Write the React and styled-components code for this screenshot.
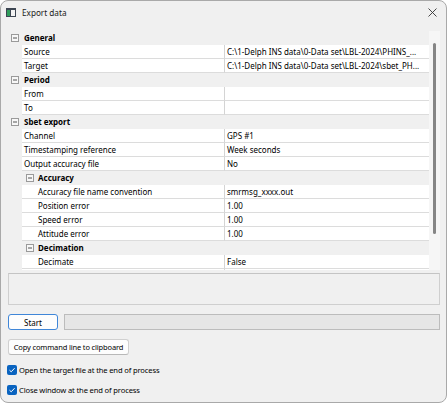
import React from "react";
import styled, { createGlobalStyle } from "styled-components";

const GlobalStyle = createGlobalStyle`
  html, body { margin: 0; padding: 0; background: #ffffff; }
  body { font-family: "Noto Sans", "Open Sans", sans-serif; }
  * { box-sizing: border-box; }
`;

const FONT = `"Noto Sans", "Open Sans", sans-serif`;

const Window = styled.div`
  width: 447px;
  height: 403px;
  background: #f0f0f0;
  border: 1px solid #a9a9a9;
  border-radius: 8px;
  overflow: hidden;
  display: flex;
  flex-direction: column;
  font-family: ${FONT};
  font-size: 8px;
  color: #000;
`;

const TitleBar = styled.div`
  height: 25px;
  display: flex;
  align-items: center;
  padding: 0 0 3px 5px;
  flex-shrink: 0;
`;

const Title = styled.span`
  margin-left: 6px;
  font-size: 8.2px;
  color: #1a1a1a;
`;

const CloseBtn = styled.div`
  margin-left: auto;
  width: 28px;
  height: 22px;
  display: flex;
  align-items: center;
  justify-content: center;
`;

const Content = styled.div`
  padding: 5px 6px 0 7px;
  display: flex;
  flex-direction: column;
`;

const Grid = styled.div`
  height: 239px;
  display: flex;
  background: #f0f0f0;
`;

const Rows = styled.div`
  flex: 1;
  overflow: hidden;
  display: flex;
  flex-direction: column;
`;

const Row = styled.div`
  height: 14px;
  flex-shrink: 0;
  display: grid;
  grid-template-columns: 14px 202px 1fr;
`;

const Margin = styled.div`
  background: #f0f0f0;
`;

const CategoryRow = styled.div`
  height: 14px;
  flex-shrink: 0;
  display: flex;
  align-items: center;
  background: #f0f0f0;
  padding-left: ${(p) => p.$indent}px;
  border-bottom: 1px solid #f0f0f0;
`;

const CategoryLabel = styled.span`
  font-weight: 700;
  margin-left: ${(p) => p.$gap}px;
  line-height: 13px;
`;

const Cell = styled.div`
  background: #ffffff;
  border-bottom: 1px solid #dcdcdc;
  line-height: 13px;
  white-space: nowrap;
  overflow: hidden;
  padding-left: ${(p) => p.$indent || 0}px;
`;

const ValueCell = styled(Cell)`
  border-left: 1px solid #d4d4d4;
  padding-left: 2px;
`;

const ScrollTrack = styled.div`
  width: 11px;
  background: #f6f6f6;
  padding: 12px 0 0 4px;
`;

const Thumb = styled.div`
  width: 3px;
  height: 191px;
  background: #868686;
  border-radius: 2px;
`;

const MessageBox = styled.div`
  margin-top: 3px;
  height: 32px;
  border: 1px solid #cfcfcf;
  border-top-color: #c4c4c4;
  background: #f0f0f0;
`;

const ActionRow = styled.div`
  margin-top: 9px;
  display: flex;
  gap: 6px;
  height: 16px;
`;

const Button = styled.button`
  font-family: ${FONT};
  font-size: ${(p) => (p.$small ? 7.5 : 8)}px;
  letter-spacing: ${(p) => (p.$small ? -0.15 : 0)}px;
  color: #000;
  height: 16px;
  width: ${(p) => p.$w}px;
  padding: 0;
  white-space: nowrap;
  background: #fdfdfd;
  border: 1px solid ${(p) => (p.$primary ? "#3f86d8" : "#d0d0d0")};
  border-bottom-color: ${(p) => (p.$primary ? "#3f86d8" : "#b8b8b8")};
  border-radius: 3px;
  line-height: 13px;
`;

const Progress = styled.div`
  flex: 1;
  background: #e6e6e6;
  border: 1px solid #bcbcbc;
`;

const CopyWrap = styled.div`
  margin-top: 9px;
  display: flex;
`;

const CheckRow = styled.label`
  display: flex;
  align-items: center;
  margin-top: ${(p) => p.$mt}px;
  height: 12px;
  margin-left: -1px;
`;

const Box = styled.span`
  width: 10px;
  height: 10px;
  border-radius: 2px;
  background: #0a64c0;
  display: flex;
  align-items: center;
  justify-content: center;
  flex-shrink: 0;
`;

const CheckLabel = styled.span`
  margin-left: 2px;
  line-height: 12px;
  font-size: 7.6px;
  letter-spacing: -0.15px;
`;

const Toggle = () => (
  <svg width="8" height="8" viewBox="0 0 8 8">
    <rect x="0.5" y="0.5" width="7" height="7" fill="#f7f7f7" stroke="#9a9a9a" />
    <line x1="2" y1="4" x2="6" y2="4" stroke="#555" />
  </svg>
);

const rows = [
  { cat: "General", level: 0 },
  { label: "Source", value: "C:\\1-Delph INS data\\0-Data set\\LBL-2024\\PHINS_...", level: 0 },
  { label: "Target", value: "C:\\1-Delph INS data\\0-Data set\\LBL-2024\\sbet_PH...", level: 0 },
  { cat: "Period", level: 0 },
  { label: "From", value: "", level: 0 },
  { label: "To", value: "", level: 0 },
  { cat: "Sbet export", level: 0 },
  { label: "Channel", value: "GPS #1", level: 0 },
  { label: "Timestamping reference", value: "Week seconds", level: 0 },
  { label: "Output accuracy file", value: "No", level: 0 },
  { cat: "Accuracy", level: 1 },
  { label: "Accuracy file name convention", value: "smrmsg_xxxx.out", level: 1 },
  { label: "Position error", value: "1.00", level: 1 },
  { label: "Speed error", value: "1.00", level: 1 },
  { label: "Attitude error", value: "1.00", level: 1 },
  { cat: "Decimation", level: 1 },
  { label: "Decimate", value: "False", level: 1 },
  { label: "", value: "", level: 1 },
];

const Check = ({ label, mt }) => (
  <CheckRow $mt={mt}>
    <Box>
      <svg width="8" height="8" viewBox="0 0 8 8">
        <path d="M1.5 4.2 L3.2 5.8 L6.6 2.2" fill="none" stroke="#fff" strokeWidth="1" />
      </svg>
    </Box>
    <CheckLabel>{label}</CheckLabel>
  </CheckRow>
);

export default function App() {
  return (
    <>
      <GlobalStyle />
      <Window>
        <TitleBar>
          <svg width="10" height="9" viewBox="0 0 10 9">
            <rect x="0" y="0" width="10" height="9" fill="#3d4652" />
            <rect x="1" y="2" width="3" height="6" fill="#2f9e5b" />
            <rect x="5" y="2" width="4" height="6" fill="#f2f2f2" />
          </svg>
          <Title>Export data</Title>
          <CloseBtn>
            <svg width="9" height="9" viewBox="0 0 9 9">
              <path d="M0.5 0.5 L8.5 8.5 M8.5 0.5 L0.5 8.5" stroke="#333" strokeWidth="0.9" />
            </svg>
          </CloseBtn>
        </TitleBar>
        <Content>
          <Grid>
            <Rows>
              {rows.map((r, i) =>
                r.cat ? (
                  <CategoryRow key={i} $indent={r.level ? 18 : 3}>
                    <Toggle />
                    <CategoryLabel $gap={r.level ? 4 : 5}>{r.cat}</CategoryLabel>
                  </CategoryRow>
                ) : (
                  <Row key={i}>
                    <Margin />
                    <Cell $indent={r.level ? 16 : 2}>{r.label}</Cell>
                    <ValueCell>{r.value}</ValueCell>
                  </Row>
                )
              )}
            </Rows>
            <ScrollTrack>
              <Thumb />
            </ScrollTrack>
          </Grid>
          <MessageBox />
          <ActionRow>
            <Button $w={50} $primary>Start</Button>
            <Progress />
          </ActionRow>
          <CopyWrap>
            <Button $w={121} $small>Copy command line to clipboard</Button>
          </CopyWrap>
          <Check mt={9} label="Open the target file at the end of process" />
          <Check mt={8} label="Close window at the end of process" />
        </Content>
      </Window>
    </>
  );
}
